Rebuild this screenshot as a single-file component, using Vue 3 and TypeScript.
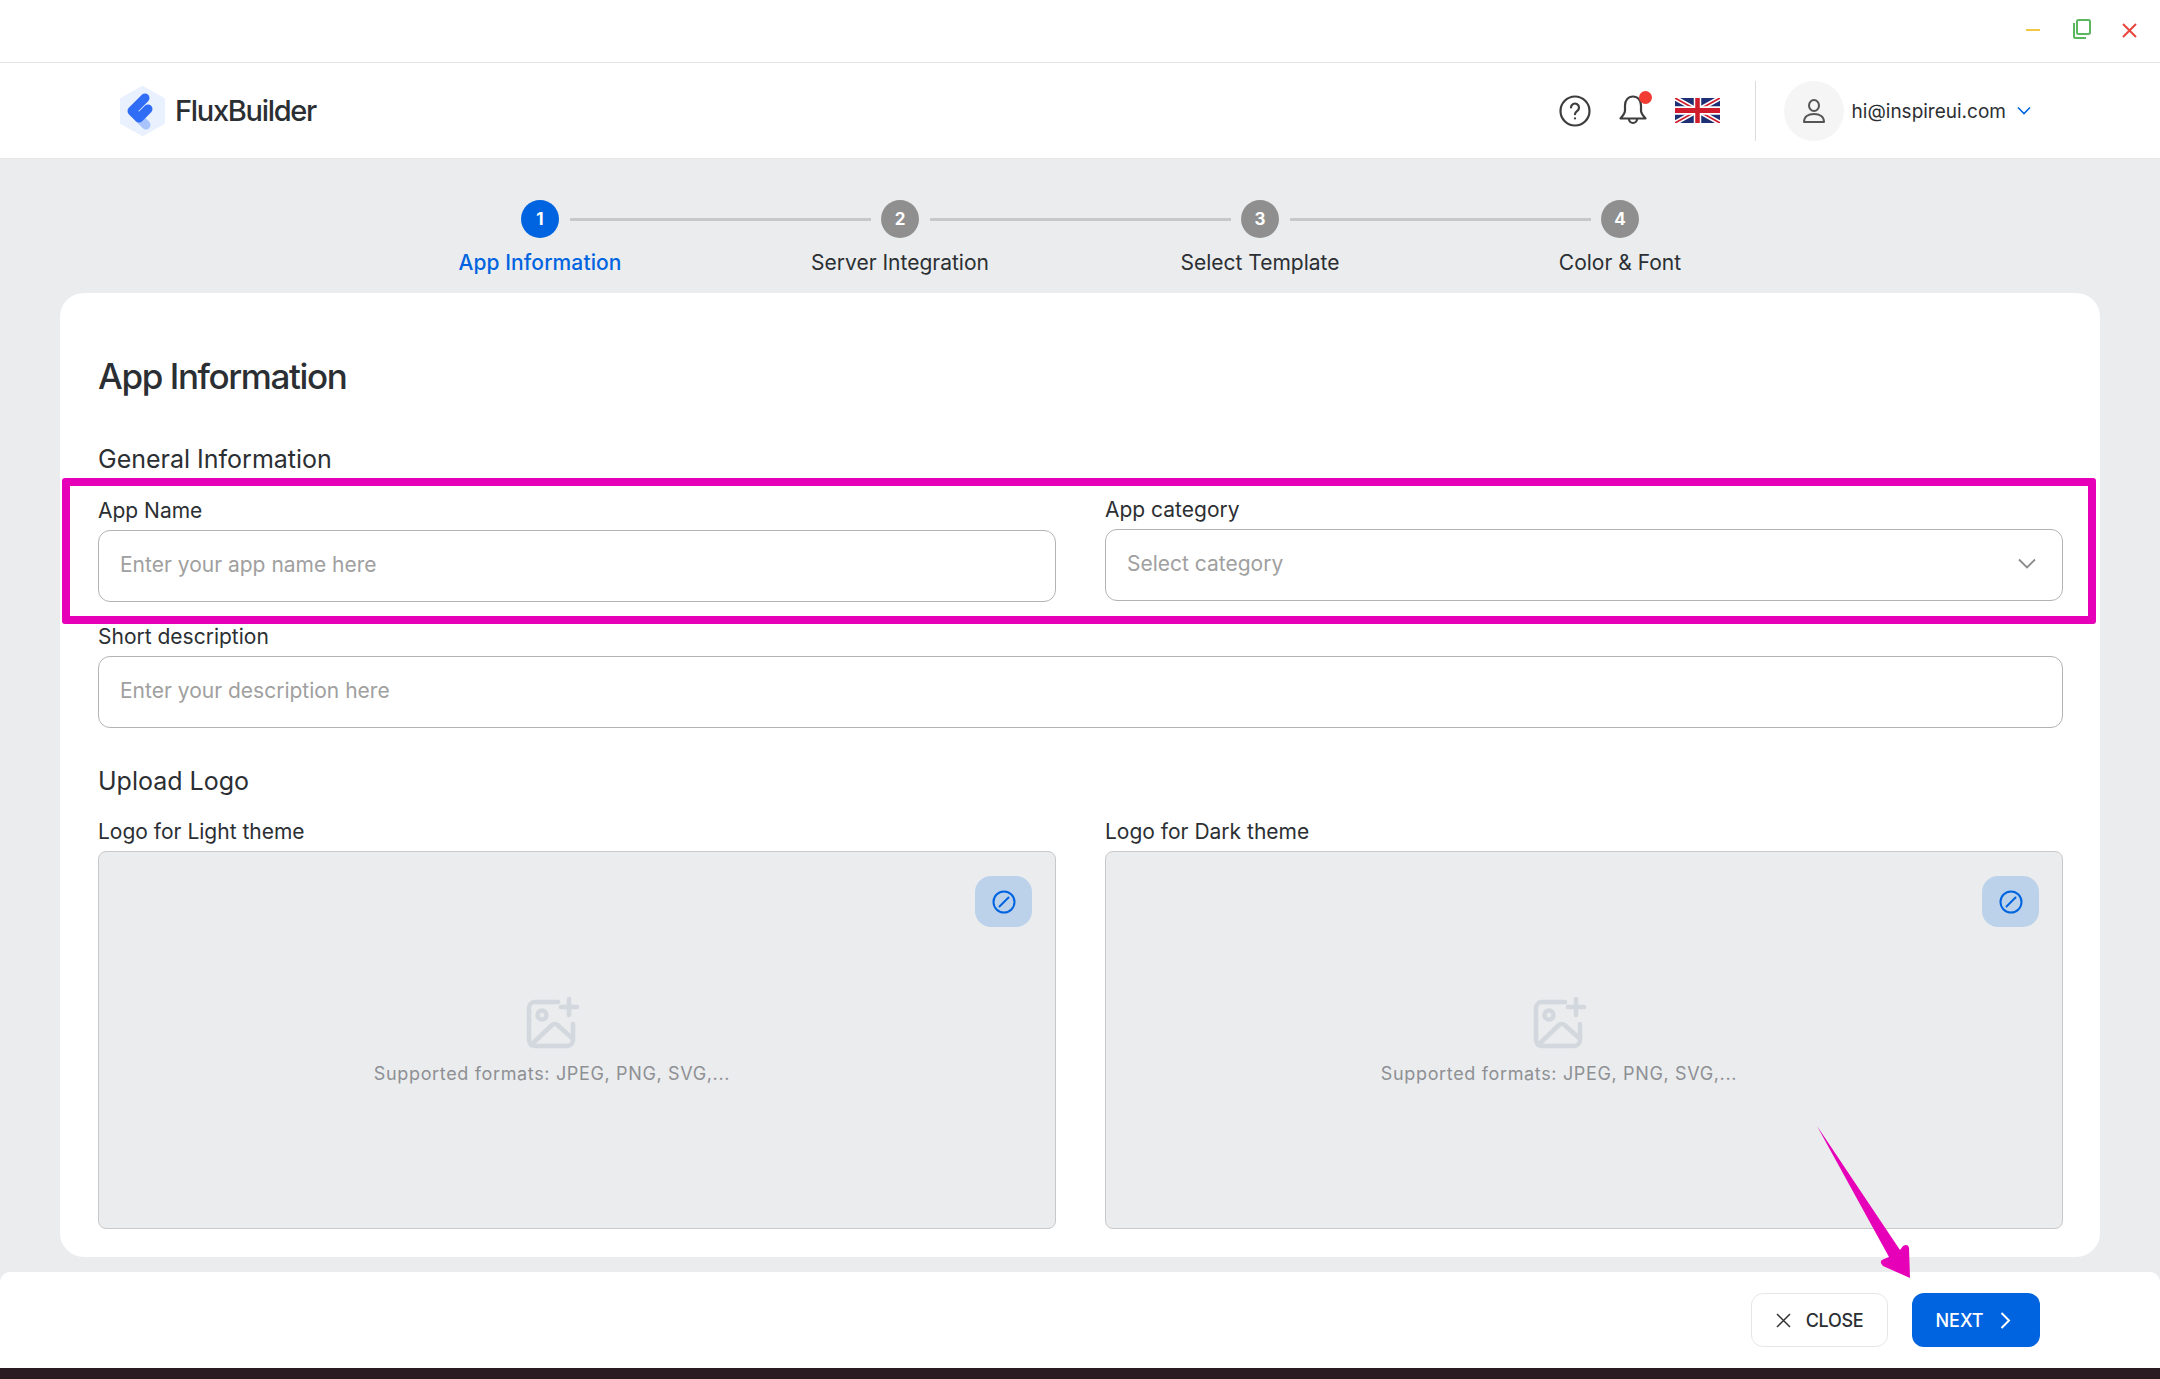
<template>
  <div class="window">
    <!-- title bar -->
    <div class="title-bar">
      <span class="win-min"></span>
      <svg class="win-max" width="19" height="20" viewBox="0 0 19 20" fill="none" stroke="#5cb660" stroke-width="2">
        <rect x="5" y="1" width="13" height="14" rx="1.5" />
        <path d="M2 4v13.5a1.5 1.5 0 0 0 1.5 1.5H14" />
      </svg>
      <svg class="win-close" width="15" height="15" viewBox="0 0 15 15" fill="none" stroke="#e8453c" stroke-width="2">
        <path d="M1 1l13 13M14 1L1 14" />
      </svg>
    </div>

    <!-- header -->
    <header class="app-header">
      <div class="brand">
        <svg width="45" height="50" viewBox="0 0 45 50">
          <path d="M22.5 2 43 13.5v23L22.5 48 2 36.5v-23z" fill="#e9f0fe" stroke="#e9f0fe" stroke-width="4" stroke-linejoin="round" />
          <path d="M19 32l7 7" stroke="#a9c4fb" stroke-width="9" stroke-linecap="round" />
          <path d="M25 12 12 25l7 7 9-9" fill="none" stroke="#2f6df6" stroke-width="9" stroke-linecap="round" stroke-linejoin="round" />
        </svg>
        <span class="brand-name">FluxBuilder</span>
      </div>

      <div class="header-right">
        <svg class="help" width="32" height="32" viewBox="0 0 32 32" fill="none" stroke="#3d3d3d" stroke-width="2.2">
          <circle cx="16" cy="16" r="14.5" />
          <path d="M12 12.5a4 4 0 1 1 6.3 3.3c-1.4 1-2.3 1.7-2.3 3.4" stroke-linecap="round" />
          <circle cx="16" cy="23.4" r="1.1" fill="#3d3d3d" stroke="none" />
        </svg>
        <span class="bell">
          <svg width="30" height="33" viewBox="0 0 30 32" fill="none" stroke="#3d3d3d" stroke-width="2.2" stroke-linejoin="round">
            <path d="M15 2c-5 0-8 4-8 9v5c0 3-2 5-4.500 8h25c-2.500-3-4.500-5-4.500-8v-5c0-5-3-9-8-9z" />
            <path d="M11 24.500a4 4 0 0 0 8 0" />
          </svg>
          <i class="bell-dot"></i>
        </span>
        <svg class="flag" width="45" height="25" viewBox="0 0 60 30" preserveAspectRatio="none">
          <clipPath id="uk-clip"><path d="M0 0h60v30H0z" /></clipPath>
          <g clip-path="url(#uk-clip)">
            <path d="M0 0h60v30H0z" fill="#1f2f75" />
            <path d="M0 0l60 30M60 0L0 30" stroke="#fff" stroke-width="6" />
            <path d="M0 0l60 30M60 0L0 30" stroke="#cf1b2b" stroke-width="2" />
            <path d="M30 0v30M0 15h60" stroke="#fff" stroke-width="10" />
            <path d="M30 0v30M0 15h60" stroke="#cf1b2b" stroke-width="6" />
          </g>
        </svg>
        <span class="divider"></span>
        <span class="avatar">
          <svg width="24" height="24" viewBox="0 0 24 24" fill="none" stroke="#555" stroke-width="2">
            <ellipse cx="12" cy="6.500" rx="5" ry="5.500" />
            <path d="M2 23c0-5 4-8 10-8s10 3 10 8z" stroke-linejoin="round" />
          </svg>
        </span>
        <span class="email">hi@inspireui.com</span>
        <svg class="email-caret" width="14" height="9" viewBox="0 0 14 9" fill="none" stroke="#0064e0" stroke-width="1.600">
          <path d="M1 1.500l6 6 6-6" />
        </svg>
      </div>
    </header>

    <main class="content">
      <!-- stepper -->
      <div class="stepper">
        <div v-for="(s, i) in steps" :key="s" class="step" :class="{ active: i === 0 }">
          <div class="step-top">
            <span class="step-circle">{{ i + 1 }}</span>
            <span v-if="i < steps.length - 1" class="step-line"></span>
          </div>
          <span class="step-label">{{ s }}</span>
        </div>
      </div>

      <!-- form -->
      <section class="card">
        <h1 class="page-title">App Information</h1>
        <h2 class="section-title general-title">General Information</h2>

        <div class="two-cols first-row">
          <div class="field">
            <label class="field-label">App Name</label>
            <input class="field-input" type="text" placeholder="Enter your app name here" />
          </div>
          <div class="field field-up">
            <label class="field-label">App category</label>
            <div class="field-input select">
              <span class="select-text">Select category</span>
              <svg width="18" height="11" viewBox="0 0 18 11" fill="none" stroke="#8c8c8c" stroke-width="1.800">
                <path d="M1 1.500l8 8 8-8" />
              </svg>
            </div>
          </div>
        </div>

        <div class="field desc-field">
          <label class="field-label">Short description</label>
          <input class="field-input" type="text" placeholder="Enter your description here" />
        </div>

        <h2 class="section-title">Upload Logo</h2>

        <div class="two-cols">
          <div v-for="l in logos" :key="l" class="field">
            <label class="field-label logo-label">{{ l }}</label>
            <div class="upload-box">
              <button class="edit-btn" type="button">
                <svg width="24" height="24" viewBox="0 0 24 24" fill="none" stroke="#0064e0" stroke-width="2">
                  <circle cx="12" cy="12" r="10.500" />
                  <path d="M7.500 16.500l9-9" stroke-linecap="round" />
                </svg>
              </button>
              <svg class="upload-icon" width="54" height="54" viewBox="0 0 54 54" fill="none" stroke="#d3d7de" stroke-width="4.500" stroke-linecap="round" stroke-linejoin="round">
                <path d="M32 6H9a6 6 0 0 0-6 6v32a6 6 0 0 0 6 6h32a6 6 0 0 0 6-6V28" />
                <circle cx="16" cy="19" r="4.500" />
                <path d="M5 49l21-20a4 4 0 0 1 5.500 0L46 42" />
                <path d="M43 3v16M35 11h16" />
              </svg>
              <span class="upload-text">Supported formats: JPEG, PNG, SVG,...</span>
            </div>
          </div>
        </div>
      </section>
    </main>

    <!-- footer -->
    <footer class="app-footer">
      <button class="btn btn-close" type="button">
        <svg width="15" height="15" viewBox="0 0 15 15" fill="none" stroke="#333" stroke-width="1.500">
          <path d="M1 1l13 13M14 1L1 14" />
        </svg>
        CLOSE
      </button>
      <button class="btn btn-next" type="button">
        NEXT
        <svg width="11" height="17" viewBox="0 0 11 17" fill="none" stroke="#fff" stroke-width="2">
          <path d="M1.500 1l7.500 7.500L1.500 16" />
        </svg>
      </button>
    </footer>
    <div class="dark-strip"></div>

    <!-- annotations on top of the screenshot -->
    <div class="highlight"></div>
    <svg class="arrow" width="100" height="160" viewBox="0 0 100 160">
      <path d="M7 6 90 130l3-4q5-3 6 2l1 30-27-12q-5-5 1-7l5-2z" fill="#e600b8" />
    </svg>
  </div>
</template>

<script setup lang="ts">
const steps: string[] = ["App Information", "Server Integration", "Select Template", "Color & Font"];
const logos: string[] = ["Logo for Light theme", "Logo for Dark theme"];
</script>

<style>
html, body {
  margin: 0;
  background: #eaecee;
}
</style>

<style scoped>
.window {
  position: relative;
  display: flex;
  flex-direction: column;
  height: 1379px;
  overflow: hidden;
  background: #eaecee;
  font-family: Inter, "Liberation Sans", sans-serif;
  color: #2b2f33;
}

/* ====== TITLE BAR ====== */

.title-bar {
  height: 63px;
  flex: none;
  box-sizing: border-box;
  border-bottom: 1px solid #e3e3e3;
  background: #fff;
  display: flex;
  align-items: center;
  padding-right: 23px;
  justify-content: flex-end;
}

.win-min {
  width: 14px;
  height: 2px;
  background: #f2c744;
  margin-right: 32px;
  margin-top: -2px;
}

.win-max {
  margin-right: 31px;
  margin-top: -5px;
}

.win-close {
  margin-top: -2px;
}

/* ====== HEADER ====== */

.app-header {
  height: 96px;
  flex: none;
  box-sizing: border-box;
  background: #fff;
  border-bottom: 1px solid #e3e5e7;
  display: flex;
  align-items: center;
  justify-content: space-between;
  padding: 0 129px 0 120px;
}

.brand {
  display: flex;
  align-items: center;
  gap: 10px;
}

.brand-name {
  font-size: 29px;
  font-weight: 500;
  letter-spacing: -1.3px;
}

.header-right {
  display: flex;
  align-items: center;
}

.bell {
  position: relative;
  display: flex;
  margin-left: 27px;
}

.bell-dot {
  position: absolute;
  top: -3px;
  right: -4px;
  width: 13px;
  height: 13px;
  border-radius: 50%;
  background: #f23c32;
}

.flag {
  margin-left: 27px;
}

.divider {
  width: 1px;
  height: 60px;
  background: #dcdcdc;
  margin: 0 28px 0 35px;
}

.avatar {
  width: 60px;
  height: 60px;
  border-radius: 50%;
  background: #f5f5f5;
  display: flex;
  align-items: center;
  justify-content: center;
}

.email {
  font-size: 19px;
  margin: 2px 0 0 8px;
}

.email-caret {
  margin-left: 11px;
}

/* ====== STEPPER ====== */

.content {
  flex: 1;
  min-height: 0;
}

.stepper {
  display: grid;
  grid-template-columns: repeat(4, 360px);
  justify-content: center;
  height: 134px;
  padding-top: 41px;
  box-sizing: border-box;
}

.step {
  display: flex;
  flex-direction: column;
  align-items: center;
}

.step-top {
  position: relative;
  height: 38px;
}

.step-circle {
  display: flex;
  align-items: center;
  justify-content: center;
  width: 38px;
  height: 38px;
  border-radius: 50%;
  background: #8f8f8f;
  color: #fff;
  font-size: 17px;
  font-weight: 700;
}

.step-line {
  position: absolute;
  left: 49px;
  top: 18px;
  width: 301px;
  height: 3px;
  background: #c6c8ca;
}

.step-label {
  margin-top: 12px;
  font-size: 21px;
  line-height: 26px;
}

.step.active .step-circle {
  background: #0064e0;
}

.step.active .step-label {
  color: #0064e0;
  font-weight: 500;
  letter-spacing: 0.1px;
}

/* ====== CARD ====== */

.card {
  height: 964px;
  box-sizing: border-box;
  margin: 0 60px;
  padding: 0 37px 0 38px;
  background: #fff;
  border-radius: 24px;
}

.page-title {
  margin: 0;
  padding-top: 61px;
  font-size: 35px;
  line-height: 44px;
  font-weight: 500;
  letter-spacing: -1.4px;
}

.section-title {
  margin: 0;
  padding-top: 37px;
  font-size: 25px;
  line-height: 32px;
  font-weight: 400;
}

.general-title {
  padding-top: 45px;
}

.two-cols {
  display: grid;
  grid-template-columns: 958px 958px;
  gap: 49px;
}

.first-row {
  margin-top: 23px;
}

.field {
  display: flex;
  flex-direction: column;
}

.field-up {
  margin-top: -1px;
}

.field-label {
  font-size: 21px;
  line-height: 26px;
  margin-bottom: 6px;
}

.field-input {
  box-sizing: border-box;
  height: 72px;
  width: 100%;
  padding: 0 21px 3px;
  border: 1.5px solid #b3b3b3;
  border-radius: 12px;
  background: #fff;
  font-family: inherit;
  font-size: 21px;
  outline: none;
}

.field-input::placeholder {
  color: #a0a0a0;
  opacity: 1;
}

.select {
  display: flex;
  align-items: center;
  justify-content: space-between;
  padding-right: 26px;
}

.select-text {
  color: #a0a0a0;
}

.desc-field {
  margin-top: 22px;
}

.logo-label {
  margin-top: 22px;
}

.upload-box {
  position: relative;
  box-sizing: border-box;
  height: 378px;
  padding-right: 50px;
  border: 1.5px solid #c6c8ca;
  border-radius: 8px;
  background: #eaecee;
  display: flex;
  flex-direction: column;
  align-items: center;
  justify-content: center;
  gap: 13px;
}

.upload-icon {
  margin-left: 2px;
}

.edit-btn {
  position: absolute;
  top: 24px;
  right: 23px;
  width: 57px;
  height: 51px;
  padding: 0;
  border: none;
  border-radius: 16px;
  background: #bcd2ea;
  display: flex;
  align-items: center;
  justify-content: center;
}

.upload-text {
  font-size: 18px;
  color: #8e9094;
  letter-spacing: 0.65px;
}

/* ====== FOOTER ====== */

.app-footer {
  height: 96px;
  flex: none;
  box-sizing: border-box;
  background: #fff;
  border-radius: 10px 10px 0 0;
  display: flex;
  align-items: center;
  justify-content: flex-end;
  gap: 24px;
  padding-right: 120px;
}

.btn {
  height: 54px;
  box-sizing: border-box;
  border-radius: 12px;
  font-family: inherit;
  font-size: 18px;
  font-weight: 500;
  display: flex;
  align-items: center;
  justify-content: center;
}

.btn-close {
  width: 137px;
  gap: 15px;
  background: #fff;
  color: #2b2f33;
  border: 1px solid #e6e6e6;
  letter-spacing: -0.3px;
}

.btn-next {
  width: 128px;
  gap: 16px;
  padding: 0 6px 0 0;
  background: #0064e0;
  color: #fff;
  border: none;
}

.dark-strip {
  height: 11px;
  flex: none;
  background: #2a1a22;
}

/* ====== ANNOTATIONS ====== */

.highlight {
  position: absolute;
  left: 62px;
  top: 478px;
  width: 2034px;
  height: 146px;
  box-sizing: border-box;
  border: 8px solid #e600b8;
  border-radius: 3px;
  pointer-events: none;
}

.arrow {
  position: absolute;
  left: 1810px;
  top: 1120px;
  pointer-events: none;
}
</style>
